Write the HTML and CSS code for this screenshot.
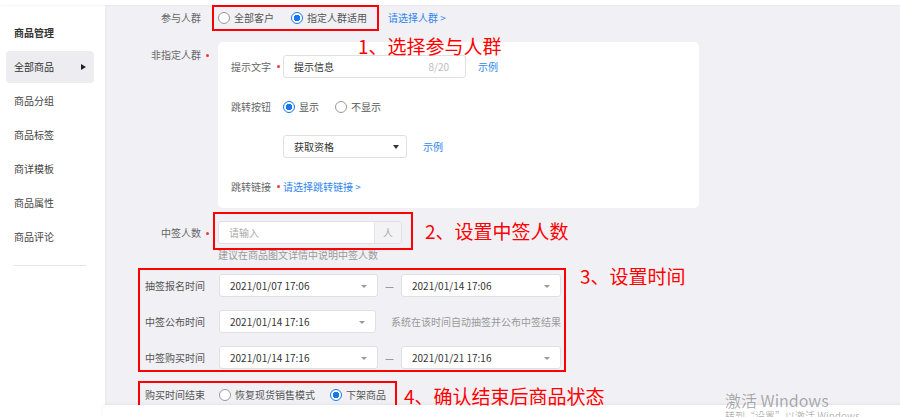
FILE: index.html
```html
<!DOCTYPE html>
<html lang="zh-CN">
<head>
  <meta charset="UTF-8">
  <title>抽签活动设置</title>
  <link rel="stylesheet" href="styles.css">
</head>
<body>
  <div class="topbar"></div>
  <div class="layout">
    <aside class="sidebar">
      <div class="side-title">商品管理</div>
      <div class="side-item active">全部商品 <i class="side-arrow"></i></div>
      <div class="side-item">商品分组</div>
      <div class="side-item">商品标签</div>
      <div class="side-item">商详模板</div>
      <div class="side-item">商品属性</div>
      <div class="side-item">商品评论</div>
      <div class="side-line"></div>
    </aside>

    <main class="main">
      <div class="row row-crowd">
        <div class="label">参与人群</div>
        <div class="req-slot short"></div>
        <div class="mark mark-crowd">
          <span class="radio"><i class="circle"></i>全部客户</span>
          <span class="radio on"><i class="circle"></i>指定人群适用</span>
        </div>
        <a class="link link-crowd">请选择人群 &gt;</a>
      </div>

      <div class="row row-card">
        <div class="label label-top">非指定人群</div>
        <div class="req-slot label-top"><i class="req"></i></div>
        <div class="card">
          <div class="card-row">
            <div class="clabel">提示文字<i class="req"></i></div>
            <div class="input input-tip">
              <span class="val">提示信息</span>
              <span class="count">8/20</span>
            </div>
            <a class="link link-eg">示例</a>
          </div>
          <div class="card-row">
            <div class="clabel">跳转按钮</div>
            <span class="radio on"><i class="circle"></i>显示</span>
            <span class="radio"><i class="circle"></i>不显示</span>
          </div>
          <div class="card-row">
            <div class="clabel"></div>
            <div class="input select">
              <span class="val">获取资格</span>
              <i class="caret-dark"></i>
            </div>
            <a class="link link-eg2">示例</a>
          </div>
          <div class="card-row">
            <div class="clabel">跳转链接<i class="req"></i></div>
            <a class="link">请选择跳转链接 &gt;</a>
          </div>
        </div>
      </div>

      <div class="row row-count">
        <div class="label label-count">中签人数</div>
        <div class="req-slot label-count"><i class="req"></i></div>
        <div class="mark mark-count">
          <div class="input input-count">
            <span class="placeholder">请输入</span>
            <span class="addon">人</span>
          </div>
        </div>
      </div>
      <div class="hint">建议在商品图文详情中说明中签人数</div>

      <div class="mark mark-time">
        <div class="trow">
          <div class="tlabel">抽签报名时间</div>
          <div class="input picker">2021/01/07 17:06<i class="caret"></i></div>
          <div class="dash">—</div>
          <div class="input picker wide">2021/01/14 17:06<i class="caret"></i></div>
        </div>
        <div class="trow">
          <div class="tlabel">中签公布时间</div>
          <div class="input picker">2021/01/14 17:16<i class="caret"></i></div>
          <div class="tnote">系统在该时间自动抽签并公布中签结果</div>
        </div>
        <div class="trow">
          <div class="tlabel">中签购买时间</div>
          <div class="input picker">2021/01/14 17:16<i class="caret"></i></div>
          <div class="dash">—</div>
          <div class="input picker wide">2021/01/21 17:16<i class="caret"></i></div>
        </div>
      </div>

      <div class="mark mark-end">
        <div class="tlabel">购买时间结束</div>
        <span class="radio"><i class="circle"></i>恢复现货销售模式</span>
        <span class="radio on"><i class="circle"></i>下架商品</span>
      </div>
    </main>
  </div>

  <div class="footer"></div>

  <div class="note note-1">1、选择参与人群</div>
  <div class="note note-2">2、设置中签人数</div>
  <div class="note note-3">3、设置时间</div>
  <div class="note note-4">4、确认结束后商品状态</div>

  <div class="watermark">
    <div class="wm-title">激活 Windows</div>
    <div class="wm-sub">转到“设置”以激活 Windows。</div>
  </div>
</body>
</html>
```

FILE: styles.css
```css
* {
  box-sizing: border-box;
}

body {
  margin: 0;
  width: 900px;
  height: 417px;
  overflow: hidden;
  position: relative;
  font-family: "Noto Sans CJK SC", "Noto Sans", sans-serif;
  font-size: 10px;
  line-height: 12px;
  color: #333;
  background-color: #f1f1f5;
}

.topbar {
  position: relative;
  z-index: 1;
  height: 5px;
  background-color: #fff;
  box-shadow: 0 1px 2px rgba(0, 0, 0, 0.04);
}

.layout {
  display: flex;
  height: 412px;
}

/* 左侧菜单 */
.sidebar {
  width: 105px;
  flex: none;
  background-color: #fff;
  padding-top: 21px;
  box-shadow: 1px 0 3px rgba(0, 0, 0, 0.03);
}

.side-title {
  padding-left: 14px;
  font-weight: bold;
  line-height: 14px;
  color: #333;
}

.side-item {
  display: flex;
  align-items: center;
  justify-content: space-between;
  height: 32px;
  margin: 0 11px 2px 6px;
  padding: 0 8px;
  border-radius: 4px;
  color: #444;
}

.side-title + .side-item {
  margin-top: 11px;
}

.side-item.active {
  background-color: #ececf1;
  color: #333;
}

.side-arrow {
  width: 0;
  height: 0;
  border-left: 5px solid #222;
  border-top: 3.5px solid transparent;
  border-bottom: 3.5px solid transparent;
}

.side-line {
  height: 1px;
  margin: 12px 19px 0 14px;
  background-color: #e6e6ea;
}

/* 表单 */
.main {
  flex: 1;
  display: flex;
  flex-direction: column;
  align-items: flex-start;
}

.row {
  display: flex;
  align-items: center;
}

.label {
  width: 96px;
  text-align: right;
  color: #666;
}

.req-slot {
  width: 17px;
  align-self: flex-start;
  padding-left: 5px;
}

.req-slot.short {
  width: 11px;
}

.req {
  display: inline-block;
  width: 3px;
  height: 3px;
  margin-bottom: 2px;
  border-radius: 50%;
  background-color: #f33;
  vertical-align: middle;
}

.mark {
  border: 2px solid #f00;
}

.mark-crowd {
  display: flex;
  gap: 17px;
  padding: 5px 10px 5px 4px;
}

.link {
  color: #2f86ee;
  white-space: nowrap;
}

.link-crowd {
  margin-left: 9px;
}

.radio {
  display: inline-flex;
  align-items: center;
  gap: 4px;
  color: #555;
  white-space: nowrap;
}

.circle {
  width: 12px;
  height: 12px;
  border: 1px solid #9a9a9a;
  border-radius: 50%;
  background-color: #fff;
}

.radio.on .circle {
  border: 1.5px solid #1677f0;
  background: radial-gradient(circle, #1677f0 0 3px, #fff 3.5px);
}

.row-card {
  align-items: flex-start;
  margin-top: 11px;
}

.label-top {
  padding-top: 7px;
}

.card {
  display: flex;
  flex-direction: column;
  gap: 17px;
  width: 481px;
  height: 166px;
  padding: 13px 13px 0;
  background-color: #fff;
  border-radius: 5px;
}

.card-row {
  display: flex;
  align-items: center;
  height: 23px;
}

.clabel {
  width: 52px;
  flex: none;
  color: #666;
}

.clabel .req {
  margin-left: 6px;
}

.card-row .radio + .radio {
  margin-left: 16px;
}

.input {
  display: flex;
  align-items: center;
  height: 23px;
  padding: 0 10px;
  border: 1px solid #dfdfe4;
  border-radius: 3px;
  background-color: #fff;
  color: #333;
  white-space: nowrap;
}

.input-tip {
  width: 183px;
  justify-content: space-between;
  padding-right: 16px;
}

.count {
  color: #bbb;
}

.link-eg {
  margin-left: 12px;
}

.select {
  width: 124px;
  justify-content: space-between;
  padding-right: 7px;
}

.caret-dark {
  width: 0;
  height: 0;
  border-top: 4px solid #333;
  border-left: 3.5px solid transparent;
  border-right: 3.5px solid transparent;
}

.link-eg2 {
  margin-left: 16px;
}

.row-count {
  align-items: flex-start;
  margin-top: 4px;
}

.label-count {
  padding-top: 15px;
}

.mark-count {
  margin-left: -5px;
  padding: 7px 9px 4px 3px;
}

.input-count {
  width: 184px;
  padding-right: 0;
  overflow: hidden;
}

.placeholder {
  flex: 1;
  color: #aaa;
}

.addon {
  align-self: stretch;
  display: flex;
  align-items: center;
  justify-content: center;
  width: 27px;
  border-left: 1px solid #e6e6ea;
  background-color: #f3f3f5;
  color: #aaa;
}

.hint {
  margin: -1px 0 0 113px;
  color: #999;
}

/* 时间设置 */
.mark-time {
  display: flex;
  flex-direction: column;
  gap: 13px;
  width: 428px;
  margin: 7px 0 0 33px;
  padding: 4px 3px 1px 5px;
}

.trow {
  display: flex;
  align-items: center;
}

.tlabel {
  width: 74px;
  flex: none;
  color: #555;
}

.picker {
  width: 159px;
  justify-content: space-between;
  padding-right: 10px;
}

.picker.wide {
  width: 160px;
}

.caret {
  width: 0;
  height: 0;
  margin-top: 2px;
  border-top: 3px solid #999;
  border-left: 3px solid transparent;
  border-right: 3px solid transparent;
}

.dash {
  width: 23px;
  text-align: center;
  color: #888;
}

.tnote {
  margin-left: 15px;
  color: #999;
  white-space: nowrap;
}

.mark-end {
  display: flex;
  align-items: center;
  width: 259px;
  margin: 9px 0 0 33px;
  padding: 6px 5px;
}

.mark-end .radio + .radio {
  margin-left: 15px;
}

.footer {
  position: absolute;
  left: 103px;
  right: 0;
  top: 405px;
  bottom: 0;
  background-color: #fff;
  box-shadow: 0 -1px 3px rgba(0, 0, 0, 0.06);
}

/* 标注 */
.note {
  position: absolute;
  z-index: 2;
  font-size: 19px;
  line-height: 22px;
  color: #f00;
  white-space: nowrap;
}

.note-1 { left: 358px; top: 35px; }
.note-2 { left: 425px; top: 220px; }
.note-3 { left: 580px; top: 265px; }
.note-4 { left: 404px; top: 385px; }

.watermark {
  position: absolute;
  z-index: 3;
  left: 725px;
  top: 390px;
  color: rgba(0, 0, 0, 0.32);
}

.wm-title {
  font-size: 16px;
  line-height: 20px;
}

.wm-sub {
  font-size: 10px;
  line-height: 12px;
}
```
